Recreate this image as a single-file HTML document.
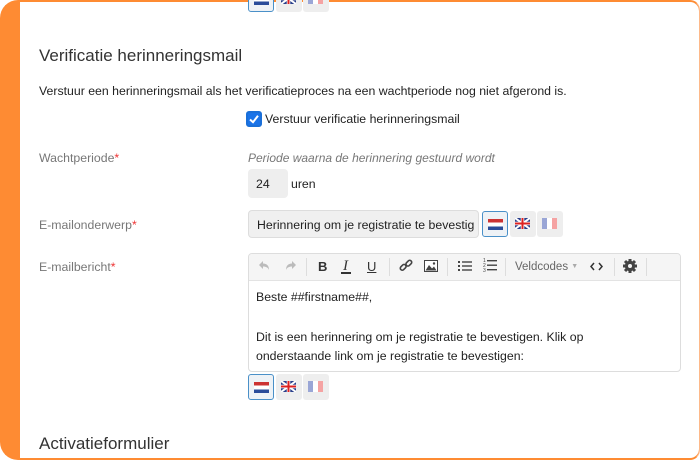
<!DOCTYPE html>
<html><head><meta charset="utf-8"><style>
*{box-sizing:border-box;margin:0;padding:0}
body{width:700px;height:460px;overflow:hidden;background:#fff;font-family:"Liberation Sans",Arial,sans-serif;color:#222;position:relative}
.frame{position:absolute;left:0;top:0;width:700px;height:460px;border:1px solid #fe8b33;border-right-color:#fdb98a;border-radius:18px 10px 10px 18px;background:#fe8b33;overflow:hidden}
.inner{position:absolute;left:19px;top:1px;right:0;bottom:1px;background:#fff;border-radius:0 9px 9px 0}
.a{position:absolute;white-space:nowrap}
.lbl{color:#777;font-size:12.3px}
.req{color:#e33}
.flag{position:absolute;width:26px;height:26px;background:#eee;border-radius:3px}
.flag.sel{border:1px solid #4a90c8;background:#eef2f6}
.flag i,.flag svg{position:absolute;left:5px;top:7px;width:15px;height:11px;display:block}
.nl{background:linear-gradient(#c33 0 33%,#fff 33% 66%,#2a4c9a 66%)}
.fr{background:linear-gradient(90deg,#9aa6d6 0 33%,#fff 33% 66%,#f5a3a3 66%);}
.ic{position:absolute;top:259px}
.sep{position:absolute;top:258px;width:1px;height:18px;background:#ddd}
</style></head><body>
<div class="frame"><div class="inner"></div></div>

<div class="flag sel" style="left:248px;top:-14px"><i class="nl"></i></div>
<div class="flag" style="left:276px;top:-14px"><svg viewBox="0 0 15 11"><rect width="15" height="11" fill="#2a3f8a"/><path d="M0 0L15 11M15 0L0 11" stroke="#fff" stroke-width="2"/><path d="M7.5 0V11M0 5.5H15" stroke="#fff" stroke-width="3.5"/><path d="M7.5 0V11M0 5.5H15" stroke="#d22" stroke-width="2"/></svg></div>
<div class="flag" style="left:303px;top:-14px"><i class="fr"></i></div>

<div class="a" style="left:39px;top:46px;font-size:17px;color:#333">Verificatie herinneringsmail</div>
<div class="a" style="left:39px;top:84px;font-size:12.3px">Verstuur een herinneringsmail als het verificatieproces na een wachtperiode nog niet afgerond is.</div>
<div class="a" style="left:246px;top:111px;width:16px;height:16px;border:2px solid #1a6fd8;border-radius:3px;background:#1a73e8"><svg width="12" height="12" viewBox="0 0 12 12" style="position:absolute;left:0;top:0"><path d="M2 6.5L5 9.2L10 2.8" stroke="#fff" stroke-width="2" fill="none"/></svg></div>
<div class="a" style="left:265px;top:112px;font-size:12.3px">Verstuur verificatie herinneringsmail</div>

<div class="a lbl" style="left:39px;top:151px">Wachtperiode<span class="req">*</span></div>
<div class="a" style="left:248px;top:151px;font-size:12px;font-style:italic;color:#777">Periode waarna de herinnering gestuurd wordt</div>
<div class="a" style="left:248px;top:169px;width:40px;height:29px;background:#eee;border-radius:4px;font-size:12.3px;padding:8px 0 0 8px">24</div>
<div class="a" style="left:291px;top:177px;font-size:12.3px">uren</div>

<div class="a lbl" style="left:39px;top:218px">E-mailonderwerp<span class="req">*</span></div>
<div class="a" style="left:248px;top:210px;width:231px;height:28px;background:#f0f0f0;border:1px solid #ddd;border-radius:4px;font-size:12.3px;padding:7px 0 0 8px;overflow:hidden">Herinnering om je registratie te bevestig</div>
<div class="flag sel" style="left:482px;top:211px"><i class="nl"></i></div>
<div class="flag" style="left:510px;top:211px"><svg viewBox="0 0 15 11"><rect width="15" height="11" fill="#2a3f8a"/><path d="M0 0L15 11M15 0L0 11" stroke="#fff" stroke-width="2"/><path d="M7.5 0V11M0 5.5H15" stroke="#fff" stroke-width="3.5"/><path d="M7.5 0V11M0 5.5H15" stroke="#d22" stroke-width="2"/></svg></div>
<div class="flag" style="left:537px;top:211px"><i class="fr"></i></div>

<div class="a lbl" style="left:39px;top:260px">E-mailbericht<span class="req">*</span></div>
<div class="a" style="left:248px;top:253px;width:433px;height:119px;border:1px solid #ddd;border-radius:4px;overflow:hidden">
<div style="height:27px;background:#f5f5f5;border-bottom:1px solid #e3e3e3"></div>
</div>
<svg class="ic" style="left:257px" width="14" height="14" viewBox="0 0 14 14"><path d="M2 6L6 2V4.5C10 4.5 12 7 12 11C11 8.5 9 7.5 6 7.5V10Z" fill="#bbb"/></svg>
<svg class="ic" style="left:284px" width="14" height="14" viewBox="0 0 14 14"><path d="M12 6L8 2V4.5C4 4.5 2 7 2 11C3 8.5 5 7.5 8 7.5V10Z" fill="#bbb"/></svg>
<div class="sep" style="left:306px"></div>
<div class="a" style="left:318px;top:259px;font-size:13px;font-weight:bold;color:#333">B</div>
<div class="a" style="left:343px;top:258px;font-family:'Liberation Serif',serif;font-style:italic;font-size:15px;color:#333">I</div>
<div class="a" style="left:341px;top:272px;width:10px;height:1.5px;background:#333"></div>
<div class="a" style="left:367px;top:259px;font-size:13px;text-decoration:underline;color:#333">U</div>
<div class="sep" style="left:389px"></div>
<svg class="ic" style="left:399px" width="14" height="14" viewBox="0 0 14 14"><g fill="none" stroke="#444" stroke-width="1.6"><rect x="1" y="6.5" width="6.5" height="4" rx="2" transform="rotate(-45 4 8.5)"/><rect x="6.5" y="2" width="6.5" height="4" rx="2" transform="rotate(-45 10 4)"/></g></svg>
<svg class="ic" style="left:424px;top:260px" width="14" height="12" viewBox="0 0 14 12"><rect x="0.5" y="0.5" width="13" height="11" fill="#fff" stroke="#444"/><path d="M1.5 10.5L5 5L8 8.5L10 6.5L12.5 10.5Z" fill="#444"/><circle cx="10" cy="3.5" r="1.2" fill="#444"/></svg>
<div class="sep" style="left:447px"></div>
<svg class="ic" style="left:458px" width="14" height="14" viewBox="0 0 14 14"><g fill="#444"><rect x="0" y="2" width="2" height="2"/><rect x="0" y="6" width="2" height="2"/><rect x="0" y="10" width="2" height="2"/><rect x="4" y="2.3" width="10" height="1.4"/><rect x="4" y="6.3" width="10" height="1.4"/><rect x="4" y="10.3" width="10" height="1.4"/></g></svg>
<svg class="ic" style="left:483px;top:257px" width="14" height="16" viewBox="0 0 14 16"><g fill="#444"><text x="0" y="5" font-size="5" font-family="Liberation Sans">1</text><text x="0" y="10" font-size="5" font-family="Liberation Sans">2</text><text x="0" y="15" font-size="5" font-family="Liberation Sans">3</text><rect x="4" y="3" width="10" height="1.4"/><rect x="4" y="7.5" width="10" height="1.4"/><rect x="4" y="12" width="10" height="1.4"/></g></svg>
<div class="sep" style="left:505px"></div>
<div class="a" style="left:515px;top:261px;font-size:11.5px;color:#666">Veldcodes <span style="font-size:7px;color:#aaa;vertical-align:2px">&#9660;</span></div>
<svg class="ic" style="left:590px;top:262px" width="13" height="9" viewBox="0 0 13 9"><path d="M4 1L1 4.5L4 8M9 1L12 4.5L9 8" stroke="#333" stroke-width="1.5" fill="none"/></svg>
<div class="sep" style="left:614px"></div>
<svg class="ic" style="left:622px;top:258px" width="16" height="16" viewBox="0 0 16 16"><g fill="#444"><circle cx="8" cy="8" r="5.2"/><g stroke="#444" stroke-width="3"><path d="M8 1V15M1 8H15M3 3L13 13M13 3L3 13"/></g></g><circle cx="8" cy="8" r="2" fill="#f5f5f5"/></svg>
<div class="sep" style="left:646px"></div>

<div class="a" style="left:256px;top:290px;font-size:12.3px">Beste ##firstname##,</div>
<div class="a" style="left:256px;top:328px;font-size:12.3px;line-height:19px">Dit is een herinnering om je registratie te bevestigen. Klik op<br>onderstaande link om je registratie te bevestigen:</div>

<div class="flag sel" style="left:248px;top:374px"><i class="nl"></i></div>
<div class="flag" style="left:276px;top:374px"><svg viewBox="0 0 15 11"><rect width="15" height="11" fill="#2a3f8a"/><path d="M0 0L15 11M15 0L0 11" stroke="#fff" stroke-width="2"/><path d="M7.5 0V11M0 5.5H15" stroke="#fff" stroke-width="3.5"/><path d="M7.5 0V11M0 5.5H15" stroke="#d22" stroke-width="2"/></svg></div>
<div class="flag" style="left:303px;top:374px"><i class="fr"></i></div>

<div class="a" style="left:39px;top:434px;font-size:17px;color:#333">Activatieformulier</div>
</body></html>
